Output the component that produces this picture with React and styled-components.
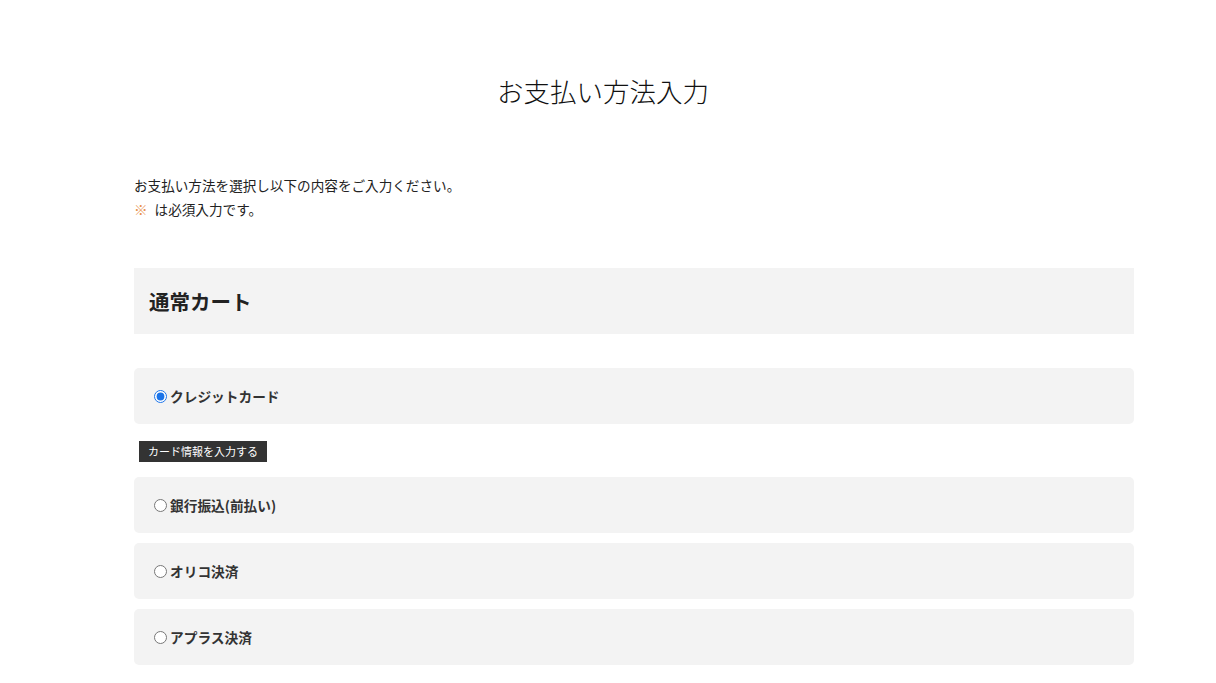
import React, { useState } from "react";
import styled, { createGlobalStyle } from "styled-components";

const GlobalStyle = createGlobalStyle`
  html, body {
    margin: 0;
    padding: 0;
    background: #fff;
  }
  body {
    font-family: "Noto Sans CJK JP", "Noto Sans", sans-serif;
    color: #333;
  }
`;

const methods = [
  { id: "credit", label: "クレジットカード" },
  { id: "bank", label: "銀行振込(前払い)" },
  { id: "orico", label: "オリコ決済" },
  { id: "aplus", label: "アプラス決済" },
];

const App = () => {
  const [selected, setSelected] = useState("credit");

  return (
    <Page>
      <GlobalStyle />
      <Title>お支払い方法入力</Title>
      <Intro>
        <p>お支払い方法を選択し以下の内容をご入力ください。</p>
        <p>
          <Mark>※</Mark>は必須入力です。
        </p>
      </Intro>
      <CartHeader>通常カート</CartHeader>
      <Methods>
        {methods.map((m) => (
          <React.Fragment key={m.id}>
            <Option>
              <Radio
                type="radio"
                name="payment"
                checked={selected === m.id}
                onChange={() => setSelected(m.id)}
              />
              {m.label}
            </Option>
            {m.id === "credit" && (
              <CardRow>
                <CardButton type="button">カード情報を入力する</CardButton>
              </CardRow>
            )}
          </React.Fragment>
        ))}
      </Methods>
    </Page>
  );
};

export default App;

const Page = styled.div`
  width: 1000px;
  margin-left: 134px;
  padding-top: 71px;
`;

const Title = styled.h1`
  margin: 0 0 0 -62px;
  text-align: center;
  font-size: 26.5px;
  font-weight: 300;
  line-height: 40px;
  color: #111;
`;

const Intro = styled.div`
  margin-top: 62px;
  font-size: 13.6px;
  line-height: 24px;
  color: #222;

  p {
    margin: 0;
  }
`;

const Mark = styled.span`
  color: #e8914a;
  margin-right: 7px;
`;

const CartHeader = styled.h2`
  margin: 47px 0 0;
  height: 66px;
  display: flex;
  align-items: center;
  padding: 0 15px;
  background: #f3f3f3;
  font-size: 20.5px;
  font-weight: 700;
  color: #222;
`;

const Methods = styled.div`
  margin-top: 34px;
  display: flex;
  flex-direction: column;
  gap: 10px;
`;

const Option = styled.label`
  height: 56px;
  display: flex;
  align-items: center;
  padding: 0 20px;
  background: #f3f3f3;
  border-radius: 5px;
  font-size: 13.7px;
  font-weight: 700;
  color: #333;
  cursor: pointer;
`;

const Radio = styled.input`
  width: 13px;
  height: 13px;
  margin: 0 3px 0 0;
  accent-color: #1a73e8;
`;

const CardRow = styled.div`
  padding: 7px 0 5px 5px;
`;

const CardButton = styled.button`
  display: block;
  height: 21px;
  padding: 0 9px;
  border: none;
  border-radius: 0;
  background: #333;
  color: #fff;
  font-family: "Noto Sans CJK JP", sans-serif;
  font-size: 11px;
  line-height: 21px;
  cursor: pointer;
`;
